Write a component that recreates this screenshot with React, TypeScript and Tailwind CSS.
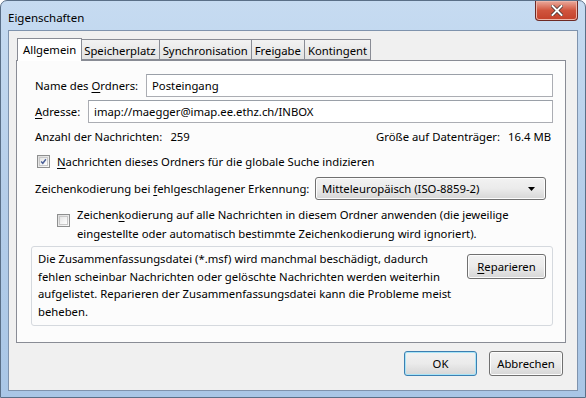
import React from "react";

const font = "font-['Segoe_UI','Noto_Sans','Open_Sans',sans-serif]";

const U: React.FC<{ children: React.ReactNode }> = ({ children }) => (
  <span className="underline underline-offset-2 decoration-1">{children}</span>
);

const Checkbox: React.FC<{ checked?: boolean }> = ({ checked }) => (
  <div className="flex h-[13px] w-[13px] shrink-0 items-center justify-center border border-[#8e8f8f] bg-gradient-to-br from-[#dcdcdc] to-[#fafafa]">
    <div className="flex h-[9px] w-[9px] items-center justify-center border border-[#c8c8c8] bg-gradient-to-br from-[#e6e6e6] to-[#ffffff]">
      {checked && (
        <svg width="9" height="9" viewBox="0 0 9 9">
          <path d="M1.5 4.5 L3.6 6.8 L7.6 1.6" fill="none" stroke="#4a5f97" strokeWidth="1.8" />
        </svg>
      )}
    </div>
  </div>
);

const Tab: React.FC<{ label: string; active?: boolean }> = ({ label, active }) =>
  active ? (
    <div className="relative z-10 -mr-[1px] mb-[-1px] flex h-[23px] items-end border border-b-0 border-[#898c95] bg-white px-[5px] pb-[4px]">
      {label}
    </div>
  ) : (
    <div className="-ml-[1px] mt-[2px] flex h-[21px] items-center border border-[#898c95] bg-gradient-to-b from-[#f2f2f2] to-[#e3e3e3] px-[3px] pt-[1px]">
      {label}
    </div>
  );

const Button: React.FC<{ children: React.ReactNode; def?: boolean; className?: string }> = ({
  children,
  def,
  className,
}) => (
  <div
    className={`flex items-center justify-center rounded-[3px] border ${
      def ? "border-[#3c7fb1] shadow-[inset_0_0_0_1px_#a8e4f7]" : "border-[#707070] shadow-[inset_0_0_0_1px_#fcfcfc]"
    } bg-gradient-to-b from-[#f2f2f2] via-[#ebebeb] to-[#d6d6d6] ${className ?? ""}`}
  >
    {children}
  </div>
);

export default function App() {
  return (
    <div className={`${font} h-[398px] w-[586px] overflow-hidden whitespace-nowrap bg-white text-[11.3px] leading-[15px] text-black`}>
      <div className="flex h-full w-full flex-col rounded-t-[7px] border border-[#5a6f87] bg-gradient-to-b from-[#c6dbf1] via-[#b4cde9] to-[#a9c6e6] px-[7px] pb-[6px]">
        {/* title bar */}
        <div className="flex h-[29px] shrink-0 items-start justify-between">
          <div className="pt-[9px] text-[11.5px] text-black">Eigenschaften</div>
          <div className="flex h-[20px] w-[43px] items-center justify-center rounded-b-[4px] border border-t-0 border-[#6d2a25] bg-gradient-to-b from-[#e9a99c] via-[#d0543d] to-[#c4412a] shadow-[inset_0_0_0_1px_#eeb5a8]">
            <svg width="12" height="11" viewBox="0 0 12 11">
              <path d="M1.5 1 L10.5 10 M10.5 1 L1.5 10" stroke="#3a2a28" strokeWidth="3.4" strokeLinecap="square" />
              <path d="M1.5 1 L10.5 10 M10.5 1 L1.5 10" stroke="#ffffff" strokeWidth="2" strokeLinecap="square" />
            </svg>
          </div>
        </div>

        {/* client area */}
        <div className="flex flex-1 flex-col border border-[#7f93ad] bg-[#f0f0f0] pt-[7px] pl-[7px] pr-[11px]">
          {/* tabs */}
          <div className="flex h-[22px] items-end pl-[1px]">
            <Tab label="Allgemein" active />
            <Tab label="Speicherplatz" />
            <Tab label="Synchronisation" />
            <Tab label="Freigabe" />
            <Tab label="Kontingent" />
          </div>

          {/* panel */}
          <div className="flex h-[283px] flex-col border border-[#898c95] bg-[#fcfcfc] pl-[18px] pr-[12px] pt-[13px]">
            <div className="flex h-[23px] items-center">
              <div className="w-[111px]">
                Name des <U>O</U>rdners:
              </div>
              <div className="flex h-[23px] flex-1 items-center border border-[#abadb3] border-t-[#9aa0a8] bg-white pl-[5px]">
                Posteingang
              </div>
            </div>
            <div className="mt-[3px] flex h-[23px] items-center">
              <div className="w-[53px]">
                <U>A</U>dresse:
              </div>
              <div className="flex h-[23px] flex-1 items-center border border-[#abadb3] border-t-[#9aa0a8] bg-white pl-[5px]">
                imap://maegger@imap.ee.ethz.ch/INBOX
              </div>
            </div>
            <div className="mt-[6px] flex h-[15px] items-center justify-between pr-[2px]">
              <div>
                Anzahl der Nachrichten:<span className="ml-[8px]">259</span>
              </div>
              <div>
                Größe auf Datenträger:<span className="ml-[8px]">16.4 MB</span>
              </div>
            </div>
            <div className="mt-[10px] flex h-[15px] items-center gap-[7px] pl-[2px]">
              <Checkbox checked />
              <div>
                <U>N</U>achrichten dieses Ordners für die globale Suche indizieren
              </div>
            </div>
            <div className="mt-[8px] flex h-[23px] items-center">
              <div className="w-[280px]">
                Zeichenkodierung bei <U>f</U>ehlgeschlagener Erkennung:
              </div>
              <div className="flex h-[23px] w-[231px] items-center justify-between rounded-[3px] border border-[#707070] bg-gradient-to-b from-[#f2f2f2] via-[#ebebeb] to-[#d6d6d6] pl-[6px] pr-[10px] shadow-[inset_0_0_0_1px_#fcfcfc]">
                <span>Mitteleuropäisch (ISO-8859-2)</span>
                <svg width="7" height="4" viewBox="0 0 7 4">
                  <path d="M0 0 H7 L3.5 4 Z" fill="#000" />
                </svg>
              </div>
            </div>
            <div className="mt-[5px] flex items-start gap-[7px] pl-[22px]">
              <div className="mt-[9px]">
                <Checkbox />
              </div>
              <div className="leading-[19px]">
                Zeichen<U>k</U>odierung auf alle Nachrichten in diesem Ordner anwenden (die jeweilige
                <br />
                eingestellte oder automatisch bestimmte Zeichenkodierung wird ignoriert).
              </div>
            </div>
            <div className="-ml-[4px] mt-[3px] flex h-[80px] w-[522px] items-start justify-between rounded-[3px] border border-[#d5d9de] pl-[6px] pr-[6px] pt-[3px]">
              <div className="leading-[17.5px]">
                Die Zusammenfassungsdatei (*.msf) wird manchmal beschädigt, dadurch
                <br />
                fehlen scheinbar Nachrichten oder gelöschte Nachrichten werden weiterhin
                <br />
                aufgelistet. Reparieren der Zusammenfassungsdatei kann die Probleme meist
                <br />
                beheben.
              </div>
              <Button className="mt-[4px] h-[25px] w-[79px]">
                <U>R</U>eparieren
              </Button>
            </div>
          </div>

          {/* buttons */}
          <div className="mt-[8px] flex justify-end gap-[12px] pr-[3px]">
            <Button def className="h-[25px] w-[73px]">
              OK
            </Button>
            <Button className="h-[25px] w-[74px]">Abbrechen</Button>
          </div>
        </div>
      </div>
    </div>
  );
}
